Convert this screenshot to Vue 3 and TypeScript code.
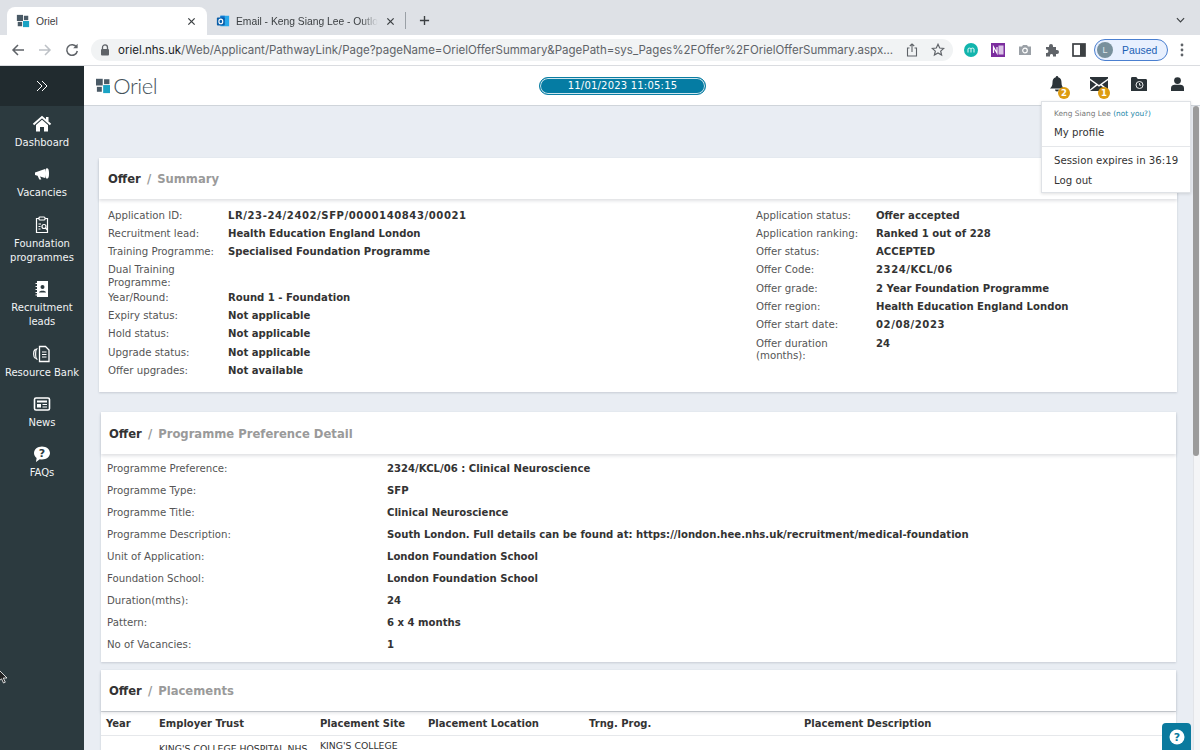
<script setup lang="ts">
interface Row {
  label: string
  value?: string
  code?: boolean
}

const summaryLeft: Row[] = [
  { label: 'Application ID:', value: 'LR/23-24/2402/SFP/0000140843/00021', code: true },
  { label: 'Recruitment lead:', value: 'Health Education England London' },
  { label: 'Training Programme:', value: 'Specialised Foundation Programme' },
  { label: 'Dual Training Programme:' },
  { label: 'Year/Round:', value: 'Round 1 - Foundation' },
  { label: 'Expiry status:', value: 'Not applicable' },
  { label: 'Hold status:', value: 'Not applicable' },
  { label: 'Upgrade status:', value: 'Not applicable' },
  { label: 'Offer upgrades:', value: 'Not available' },
]

const summaryRight: Row[] = [
  { label: 'Application status:', value: 'Offer accepted' },
  { label: 'Application ranking:', value: 'Ranked 1 out of 228' },
  { label: 'Offer status:', value: 'ACCEPTED' },
  { label: 'Offer Code:', value: '2324/KCL/06', code: true },
  { label: 'Offer grade:', value: '2 Year Foundation Programme' },
  { label: 'Offer region:', value: 'Health Education England London' },
  { label: 'Offer start date:', value: '02/08/2023', code: true },
  { label: 'Offer duration (months):', value: '24' },
]

const preference: Row[] = [
  { label: 'Programme Preference:', value: '2324/KCL/06 : Clinical Neuroscience' },
  { label: 'Programme Type:', value: 'SFP' },
  { label: 'Programme Title:', value: 'Clinical Neuroscience' },
  {
    label: 'Programme Description:',
    value: 'South London. Full details can be found at: https://london.hee.nhs.uk/recruitment/medical-foundation',
  },
  { label: 'Unit of Application:', value: 'London Foundation School' },
  { label: 'Foundation School:', value: 'London Foundation School' },
  { label: 'Duration(mths):', value: '24' },
  { label: 'Pattern:', value: '6 x 4 months' },
  { label: 'No of Vacancies:', value: '1' },
]

const placementColumns = [
  'Year',
  'Employer Trust',
  'Placement Site',
  'Placement Location',
  'Trng. Prog.',
  'Placement Description',
]
</script>

<template>
  <div class="screen">
    <div class="tabstrip">
      <div class="tab active">
        <svg class="favicon" viewBox="0 0 16 16">
          <rect x="1" y="1" width="7" height="7" fill="#4a5a66" />
          <rect x="9" y="2" width="5" height="5" fill="#4a5a66" />
          <rect x="2" y="9" width="5" height="5" fill="#4a5a66" />
          <rect x="8" y="8" width="7" height="7" fill="#1aa3c4" />
        </svg>
        <span class="tab-title">Oriel</span>
        <svg class="tab-close" viewBox="0 0 10 10">
          <path d="M1.5 1.5l7 7M8.5 1.5l-7 7" stroke="#3c4043" stroke-width="1.4" />
        </svg>
      </div>
      <div class="tab">
        <svg class="favicon" viewBox="0 0 16 16">
          <rect x="5" y="2" width="10" height="12" fill="#28a8ea" />
          <rect x="5" y="2" width="5" height="6" fill="#0f78d4" />
          <rect x="1" y="4" width="9" height="9" rx="1" fill="#0a5ea8" />
          <ellipse cx="5.5" cy="8.5" rx="2.2" ry="2.6" fill="none" stroke="#fff" stroke-width="1.3" />
        </svg>
        <span class="tab-title fade">Email - Keng Siang Lee - Outlo</span>
        <svg class="tab-close" viewBox="0 0 10 10">
          <path d="M1.5 1.5l7 7M8.5 1.5l-7 7" stroke="#3c4043" stroke-width="1.4" />
        </svg>
      </div>
      <span class="tab-sep"></span>
      <svg class="new-tab" viewBox="0 0 12 12">
        <path d="M6 1v10M1 6h10" stroke="#3c4043" stroke-width="1.5" />
      </svg>
      <svg class="tab-chevron" viewBox="0 0 10 6">
        <path d="M1 1l4 4 4-4" fill="none" stroke="#3c4043" stroke-width="1.3" />
      </svg>
    </div>

    <div class="toolbar">
      <span class="tool">
        <svg viewBox="0 0 14 14" width="14" height="14">
          <path d="M13 7H2M7 2L2 7l5 5" fill="none" stroke="#5f6368" stroke-width="1.5" />
        </svg>
      </span>
      <span class="tool">
        <svg viewBox="0 0 14 14" width="14" height="14">
          <path d="M1 7h11M7 2l5 5-5 5" fill="none" stroke="#bdc1c6" stroke-width="1.5" />
        </svg>
      </span>
      <span class="tool">
        <svg viewBox="0 0 14 14" width="14" height="14">
          <path d="M11.6 4.2A5.3 5.3 0 1 0 12.3 8" fill="none" stroke="#5f6368" stroke-width="1.5" />
          <path d="M12.6 0.8v4.4H8.2z" fill="#5f6368" />
        </svg>
      </span>
      <div class="omnibox">
        <svg class="lock" viewBox="0 0 10 12" width="10" height="12">
          <path d="M2.5 5V3.4a2.5 2.5 0 0 1 5 0V5" fill="none" stroke="#5f6368" stroke-width="1.3" />
          <rect x="1" y="5" width="8" height="6.5" rx="1" fill="#5f6368" />
        </svg>
        <span class="url"><b>oriel.nhs.uk</b>/Web/Applicant/PathwayLink/Page?pageName=OrielOfferSummary&amp;PagePath=sys_Pages%2FOffer%2FOrielOfferSummary.aspx...</span>
        <svg class="omni-icon share" viewBox="0 0 12 14" width="12" height="14">
          <path d="M3.5 5H1.5v8h9V5h-2M6 9V1M3.8 3L6 .9 8.2 3" fill="none" stroke="#5f6368" stroke-width="1.1" />
        </svg>
        <svg class="omni-icon star" viewBox="0 0 14 14" width="14" height="14">
          <path d="M7 1.3l1.7 3.7 4 .4-3 2.7.9 4L7 10l-3.6 2.1.9-4-3-2.7 4-.4z" fill="none" stroke="#5f6368" stroke-width="1.2" />
        </svg>
      </div>
      <span class="ext ext-first">
        <svg viewBox="0 0 14 14" width="14" height="14">
          <circle cx="7" cy="7" r="7" fill="#12b5ad" />
          <path d="M4 9.5V6c0-1.2 3-1.2 3 0v3.5M7 6c0-1.2 3-1.2 3 0v3.5" fill="none" stroke="#fff" stroke-width=".9" />
        </svg>
      </span>
      <span class="ext">
        <svg viewBox="0 0 14 14" width="14" height="14">
          <rect width="14" height="14" fill="#7b2d9e" />
          <rect x="7.5" y="2.5" width="5" height="9" fill="#d9c3e6" />
          <path d="M2.5 10V4l3.5 6V4" fill="none" stroke="#fff" stroke-width="1.2" />
        </svg>
      </span>
      <span class="ext">
        <svg viewBox="0 0 14 14" width="14" height="14">
          <path d="M1 3.5h3L5 2h4l1 1.5h3V12H1z" fill="#9aa0a6" />
          <circle cx="7" cy="7.5" r="2.3" fill="none" stroke="#fff" stroke-width="1.2" />
        </svg>
      </span>
      <span class="ext">
        <svg viewBox="0 0 14 14" width="14" height="14">
          <path d="M1 4h3V3a2 2 0 0 1 4 0v1h3v3h1a2 2 0 0 1 0 4h-1v2.5H8V12a1.6 1.6 0 0 0-3 0v1.5H1V10h1a1.8 1.8 0 0 0 0-3.5H1z" fill="#5f6368" />
        </svg>
      </span>
      <span class="ext">
        <svg viewBox="0 0 14 14" width="14" height="14">
          <rect x="1" y="1" width="12" height="12" fill="none" stroke="#3c4043" stroke-width="1.7" />
          <rect x="8" y="1" width="5" height="12" fill="#3c4043" />
        </svg>
      </span>
      <div class="profile">
        <span class="avatar">L</span>
        <span>Paused</span>
      </div>
      <svg class="kebab" viewBox="0 0 4 14" width="4" height="14">
        <circle cx="2" cy="2" r="1.4" fill="#5f6368" />
        <circle cx="2" cy="7" r="1.4" fill="#5f6368" />
        <circle cx="2" cy="12" r="1.4" fill="#5f6368" />
      </svg>
    </div>

    <div class="app">
      <aside class="sidebar">
        <div class="side-top">
          <svg viewBox="0 0 12 12" width="12" height="12">
            <path d="M1 1l5 5-5 5M6 1l5 5-5 5" fill="none" stroke="#fff" stroke-width="1" />
          </svg>
        </div>
        <nav class="side-nav">
          <a class="side-item">
            <svg viewBox="0 0 20 20" width="20" height="20">
              <path d="M1.5 10.5L10 3l8.5 7.5" fill="none" stroke="#fff" stroke-width="2" />
              <rect x="14" y="3" width="2.5" height="4" fill="#fff" />
              <path d="M4 11l6-5.2 6 5.2v6.5h-4V13H8v4.5H4z" fill="#fff" />
            </svg>
            <span>Dashboard</span>
          </a>
          <a class="side-item">
            <svg viewBox="0 0 20 20" width="20" height="20">
              <path d="M3 8.5L13 5v9L3 11z" fill="#fff" />
              <path d="M5.5 11.5l1.8 4h2L7.8 12z" fill="#fff" />
              <ellipse cx="15" cy="9.5" rx="2" ry="5.2" fill="#fff" />
            </svg>
            <span>Vacancies</span>
          </a>
          <a class="side-item">
            <svg viewBox="0 0 20 20" width="20" height="20">
              <path d="M7 3.5H4.5v14h11v-14H13" fill="none" stroke="#fff" stroke-width="1.2" />
              <rect x="7" y="2" width="6" height="3" rx="1" fill="none" stroke="#fff" stroke-width="1.2" />
              <path d="M6.5 9H9M6.5 11.5h2M6.5 14h2" stroke="#fff" stroke-width="1.1" />
              <circle cx="12" cy="11.5" r="2" fill="none" stroke="#fff" stroke-width="1.2" />
              <path d="M13.5 13l2 2" stroke="#fff" stroke-width="1.4" />
            </svg>
            <span>Foundation<br />programmes</span>
          </a>
          <a class="side-item">
            <svg viewBox="0 0 20 20" width="20" height="20">
              <rect x="5" y="2" width="11" height="16" fill="#fff" />
              <path d="M3.5 4.5h2M3.5 7.5h2M3.5 10.5h2M3.5 13.5h2M3.5 16h2" stroke="#fff" stroke-width="1" />
              <circle cx="10.5" cy="8" r="2" fill="#2c3a3f" />
              <path d="M7 13.5c0-2.3 7-2.3 7 0z" fill="#2c3a3f" />
            </svg>
            <span>Recruitment<br />leads</span>
          </a>
          <a class="side-item">
            <svg viewBox="0 0 20 20" width="20" height="20">
              <path d="M7.5 2.5h6L17 6v11.5H7.5z" fill="none" stroke="#fff" stroke-width="1.3" />
              <path d="M10 8h4.5M10 10.5h4.5M10 13h4.5" stroke="#fff" stroke-width="1.2" />
              <path d="M5.5 4.5C3 5 3 15 5.5 15.5M3.5 5C1 7 1 13 3.5 14.5" fill="none" stroke="#fff" stroke-width="1.2" />
            </svg>
            <span>Resource Bank</span>
          </a>
          <a class="side-item">
            <svg viewBox="0 0 20 20" width="20" height="20">
              <rect x="2.5" y="4" width="15" height="12" rx="1.5" fill="none" stroke="#fff" stroke-width="1.6" />
              <rect x="5" y="6.5" width="10" height="2" fill="#fff" />
              <rect x="5" y="10" width="4" height="3.5" fill="#fff" />
              <path d="M10.5 10.5H15M10.5 13H15" stroke="#fff" stroke-width="1.2" />
            </svg>
            <span>News</span>
          </a>
          <a class="side-item">
            <svg viewBox="0 0 20 20" width="20" height="20">
              <path d="M10 2.5c4.4 0 8 2.8 8 6.5s-3.6 6.5-8 6.5c-.8 0-1.5-.1-2.2-.2L4 18l.6-4C3 12.8 2 11 2 9c0-3.7 3.6-6.500 8-6.500z" fill="#fff" />
              <text x="10" y="13" text-anchor="middle" class="faq-mark">?</text>
            </svg>
            <span>FAQs</span>
          </a>
        </nav>
        <svg class="cursor" viewBox="0 0 10 16" width="10" height="16">
          <path d="M0 1v11l2.5-2.2L4.5 14l1.8-.8-2-4.200H8z" fill="#222" stroke="#fff" stroke-width=".8" />
        </svg>
      </aside>

      <div class="right">
        <header class="topbar">
          <div class="logo">
            <svg viewBox="0 0 16 17" width="16" height="17">
              <rect x="0" y="1" width="7.5" height="7.5" fill="#4a5a66" />
              <rect x="9" y="1.5" width="6" height="5.5" fill="#4a5a66" />
              <rect x="1" y="10" width="5.5" height="5.5" fill="#4a5a66" />
              <rect x="8" y="8" width="8" height="9" fill="#1aa3c4" />
            </svg>
            <span class="logo-text">Oriel</span>
          </div>
          <div class="clock">11/01/2023 11:05:15</div>
          <div class="top-icons">
            <span class="top-icon wide">
              <svg viewBox="0 0 14 16" width="14" height="16">
                <path d="M7 0a1.2 1.2 0 0 1 1.2 1.3C10.8 2 11.5 4 11.5 6.5c0 3 .8 4.5 2.500 6H0c1.700-1.500 2.500-3 2.500-6C2.500 4 3.200 2 5.800 1.300A1.200 1.200 0 0 1 7 0z" fill="#2b3338" />
                <path d="M5 13.5a2 2 0 0 0 4 0z" fill="#2b3338" />
              </svg>
              <span class="badge">2</span>
            </span>
            <span class="top-icon wide">
              <svg viewBox="0 0 18 14" width="18" height="14">
                <path d="M0 0h18v1.5L9 8 0 1.5z" fill="#2b3338" />
                <path d="M0 3.3L6 7.6 0 12.5zM18 3.3L12 7.6l6 4.9zM7.3 8.5L9 9.8l1.7-1.3L18 14H0z" fill="#2b3338" />
              </svg>
              <span class="badge">1</span>
            </span>
            <span class="top-icon">
              <svg viewBox="0 0 16 14" width="16" height="14">
                <path d="M0 1.5C0 .7.5 0 1.3 0h4l1.500 2h7.900c.7 0 1.300.6 1.300 1.300V14H0z" fill="#2b3338" />
                <circle cx="8.5" cy="8" r="3.5" fill="none" stroke="#fff" stroke-width=".9" />
                <path d="M8.5 6v2.200h1.700" fill="none" stroke="#fff" stroke-width=".8" />
              </svg>
            </span>
            <span class="top-icon">
              <svg viewBox="0 0 13 14" width="13" height="14">
                <circle cx="6.5" cy="3.6" r="3.4" fill="#2b3338" />
                <path d="M0 14v-3c0-2.3 2-3.3 3.5-3.3h6c1.500 0 3.500 1 3.500 3.300v3z" fill="#2b3338" />
              </svg>
            </span>
          </div>
        </header>

        <div class="body-area">
          <main class="content">
            <section class="card first">
              <h2 class="card-head"><b>Offer</b> <span class="slash">/</span> Summary</h2>
              <div class="summary">
                <div class="summary-col">
                  <div v-for="row in summaryLeft" :key="row.label" class="kv">
                    <span class="kv-label">{{ row.label }}</span>
                    <span class="kv-value" :class="{ code: row.code }">{{ row.value }}</span>
                  </div>
                </div>
                <div class="summary-col">
                  <div v-for="row in summaryRight" :key="row.label" class="kv">
                    <span class="kv-label">{{ row.label }}</span>
                    <span class="kv-value" :class="{ code: row.code }">{{ row.value }}</span>
                  </div>
                </div>
              </div>
            </section>

            <section class="card inset pref-card">
              <h2 class="card-head tall"><b>Offer</b> <span class="slash">/</span> Programme Preference Detail</h2>
              <div class="pref">
                <div v-for="row in preference" :key="row.label" class="pref-row">
                  <span class="pref-label">{{ row.label }}</span>
                  <span class="kv-value">{{ row.value }}</span>
                </div>
              </div>
            </section>

            <section class="card inset">
              <h2 class="card-head"><b>Offer</b> <span class="slash">/</span> Placements</h2>
              <div class="place-head">
                <span v-for="col in placementColumns" :key="col">{{ col }}</span>
              </div>
              <div class="place-row">
                <span></span>
                <span class="employer">KING'S COLLEGE HOSPITAL NHS</span>
                <span>KING'S COLLEGE<br />HOSPITAL</span>
              </div>
            </section>
          </main>
          <div class="scroll-track"><div class="scroll-thumb"></div></div>
        </div>
      </div>

      <div class="menu">
        <div class="menu-user">Keng Siang Lee <span class="not-you">(not you?)</span></div>
        <div class="menu-item profile-item">My profile</div>
        <div class="menu-div"></div>
        <div class="menu-item session">Session expires in 36:19</div>
        <div class="menu-item logout">Log out</div>
      </div>

      <div class="help">
        <svg viewBox="0 0 16 16" width="16" height="16">
          <circle cx="8" cy="8" r="7.5" fill="#fff" />
          <text x="8" y="12" text-anchor="middle" class="help-mark">?</text>
        </svg>
      </div>
    </div>
  </div>
</template>

<style>
html,
body {
  margin: 0;
  overflow: hidden;
}
</style>

<style scoped>
.screen {
  position: relative;
  width: 1200px;
  height: 750px;
  overflow: hidden;
  font-family: "DejaVu Sans", Verdana, sans-serif;
  font-size: 10.2px;
  color: #333;
  background: #fff;
}

/* browser chrome */
.tabstrip {
  position: relative;
  display: flex;
  align-items: flex-end;
  height: 35px;
  padding-left: 7px;
  background: #dee1e6;
  box-sizing: border-box;
  font-family: "Liberation Sans", Arial, sans-serif;
  font-size: 10.3px;
  color: #3c4043;
}

.tab {
  display: flex;
  align-items: center;
  width: 199px;
  height: 28px;
  padding: 0 9px;
  box-sizing: border-box;
  border-radius: 8px 8px 0 0;
}

.tab.active {
  background: #fff;
  width: 200px;
}

.favicon {
  width: 14px;
  height: 14px;
  flex: none;
  margin-right: 6px;
}

.tab-title {
  flex: 1;
  white-space: nowrap;
  overflow: hidden;
}

.tab-title.fade {
  -webkit-mask-image: linear-gradient(to right, #000 88%, transparent 100%);
  mask-image: linear-gradient(to right, #000 88%, transparent 100%);
}

.tab-close {
  width: 9px;
  height: 9px;
  flex: none;
  margin-left: 8px;
  margin-right: 2px;
}

.tab-sep {
  width: 1px;
  height: 17px;
  margin: 0 0 6px -1px;
  background: #9aa0a6;
}

.new-tab {
  width: 11px;
  height: 11px;
  margin: 0 0 9px 13px;
}

.tab-chevron {
  width: 9px;
  height: 6px;
  margin: 0 15px 12px auto;
}

.toolbar {
  display: flex;
  align-items: center;
  height: 31px;
  padding-left: 4.5px;
  box-sizing: border-box;
  background: #fff;
  border-bottom: 1px solid #dadce0;
}

.tool {
  display: flex;
  justify-content: center;
  width: 27px;
}

.omnibox {
  display: flex;
  align-items: center;
  width: 862px;
  height: 22px;
  margin-left: 5.5px;
  padding: 0 8px 0 9px;
  box-sizing: border-box;
  background: #f1f3f4;
  border-radius: 11px;
}

.lock {
  flex: none;
  margin-right: 8px;
}

.url {
  flex: none;
  width: 787px;
  white-space: nowrap;
  font-family: Inter, "Liberation Sans", sans-serif;
  font-size: 11.5px;
  color: #5f6368;
}

.url b {
  font-weight: 400;
  color: #202124;
}

.omni-icon {
  flex: none;
}

.share {
  margin-left: 1px;
}

.star {
  margin-left: 13px;
}

.ext {
  display: flex;
  justify-content: center;
  width: 27px;
}

.ext-first {
  margin-left: 4.5px;
}

.profile {
  display: flex;
  align-items: center;
  gap: 9px;
  width: 74px;
  height: 22px;
  margin-left: 1.5px;
  padding-left: 2px;
  box-sizing: border-box;
  background: #e8f0fe;
  border: 1px solid #4a7fd0;
  border-radius: 11px;
  font-family: "Liberation Sans", Arial, sans-serif;
  font-size: 10.4px;
  color: #1a5fb4;
}

.avatar {
  display: flex;
  align-items: center;
  justify-content: center;
  width: 16px;
  height: 16px;
  border-radius: 50%;
  background: #78909c;
  color: #dfe6ea;
  font-size: 9px;
}

.kebab {
  margin-left: 12px;
}

/* application */
.app {
  display: flex;
  height: 684px;
}

.sidebar {
  position: relative;
  flex: none;
  width: 84px;
  background: #2c3a3f;
  color: #fff;
}

.side-top {
  display: flex;
  align-items: center;
  justify-content: center;
  height: 40px;
  background: #212b2f;
}

.side-item {
  display: flex;
  flex-direction: column;
  align-items: center;
  padding: 8px 0 6.4px;
  font-size: 10px;
  text-align: center;
  white-space: nowrap;
  line-height: 14px;
  color: #f2f4f5;
}

.side-item svg {
  margin-bottom: 2px;
}

.faq-mark {
  font-family: "DejaVu Sans", sans-serif;
  font-size: 11px;
  font-weight: 700;
  fill: #2c3a3f;
}

.cursor {
  position: absolute;
  left: -1px;
  top: 603px;
}

.right {
  display: flex;
  flex-direction: column;
  flex: 1;
  min-width: 0;
}

.topbar {
  display: flex;
  align-items: center;
  flex: none;
  height: 40px;
  padding-right: 4px;
  box-sizing: border-box;
  background: #fff;
  border-bottom: 1px solid #cfd4da;
}

.logo {
  display: flex;
  align-items: center;
  gap: 3px;
  width: 61px;
  margin-left: 12px;
}

.logo-text {
  font-family: Lato, "Open Sans", sans-serif;
  font-weight: 300;
  font-size: 22px;
  letter-spacing: -0.5px;
  line-height: 22px;
  color: #44525a;
}

.clock {
  width: 167px;
  height: 18px;
  margin-left: 382px;
  box-sizing: border-box;
  border: 1px solid #0b7ea3;
  box-shadow: inset 0 0 0 1px #cfe6ee;
  border-radius: 9px;
  background: #057ca3;
  color: #fff;
  font-size: 10px;
  line-height: 16px;
  text-align: center;
  letter-spacing: 0.2px;
}

.top-icons {
  display: flex;
  margin-left: auto;
  margin-top: -4px;
}

.top-icon {
  position: relative;
  display: flex;
  justify-content: center;
  align-items: center;
  width: 38px;
  height: 20px;
}

.top-icon.wide {
  width: 42px;
}

.badge {
  position: absolute;
  left: 50%;
  top: 13.5px;
  width: 12px;
  height: 12px;
  margin-left: 1px;
  border-radius: 50%;
  background: #dd9c12;
  color: #fff;
  font-size: 8.5px;
  font-weight: 700;
  line-height: 12px;
  text-align: center;
}

.top-icon.wide + .top-icon.wide .badge {
  margin-left: -1px;
}

.body-area {
  display: flex;
  flex: 1;
  min-height: 0;
  background: #e9edf3;
}

.content {
  flex: 1;
  min-width: 0;
  padding: 52px 16px 0 15px;
  overflow: hidden;
}

.scroll-track {
  flex: none;
  width: 7px;
  background: #f4f5f7;
  border-left: 1px solid #e2e4e8;
  box-sizing: border-box;
}

.scroll-thumb {
  height: 350px;
  margin-left: -1px;
  width: 6px;
  border-radius: 3px;
  background: #9b9b9b;
}

.card {
  background: #fff;
  box-shadow: 0 1px 2px rgba(60, 70, 90, 0.2);
}

.card.first {
  margin-bottom: 20px;
}

.card.inset {
  margin: 0 1px 0 2px;
}

.pref-card.inset {
  margin-bottom: 8px;
}

.card-head {
  position: relative;
  height: 41px;
  margin: 0;
  padding: 1px 0 0 9px;
  box-sizing: border-box;
  font-size: 11.6px;
  font-weight: 700;
  line-height: 41px;
  color: #9a9a9a;
  background: #fff;
  box-shadow: 0 2px 3px rgba(60, 70, 90, 0.16);
}

.inset .card-head {
  padding-left: 8px;
}

.card-head.tall {
  height: 42px;
  line-height: 42px;
}

.card-head b {
  color: #333;
}

.slash {
  margin: 0 2px;
}

.summary {
  display: flex;
  padding: 10.5px 0 8.8px 9px;
}

.summary-col {
  flex: none;
  width: 648px;
}

.summary-col + .summary-col {
  width: 420px;
}

.kv {
  display: flex;
  min-height: 18.3px;
  padding-bottom: 2.3px;
  box-sizing: border-box;
  line-height: 12.5px;
}

.kv-label {
  flex: none;
  width: 120px;
  padding-right: 8px;
  box-sizing: border-box;
  color: #555;
}

.kv-value {
  font-size: 10.1px;
  font-weight: 700;
  color: #333;
}

.kv-value.code {
  letter-spacing: 0.55px;
}

.pref {
  padding: 4px 0 6px 6px;
}

.pref-row {
  display: flex;
  align-items: center;
  height: 22px;
}

.pref-label {
  flex: none;
  width: 280px;
  color: #555;
}

.place-head,
.place-row {
  display: grid;
  grid-template-columns: 53px 161px 108px 161px 215px 1fr;
  padding-left: 5px;
}

.place-head {
  height: 25px;
  align-items: center;
  box-sizing: border-box;
  border-top: 1px solid #d5d8dc;
  border-bottom: 1px solid #e6e8eb;
  font-size: 10px;
  font-weight: 700;
  color: #333;
}

.place-row {
  padding-top: 3px;
  font-size: 9.3px;
  line-height: 13px;
  color: #333;
}

.employer {
  padding-top: 3px;
  white-space: nowrap;
}

/* overlays */
.menu {
  position: absolute;
  left: 1041px;
  top: 101px;
  width: 150px;
  height: 92px;
  box-sizing: border-box;
  padding-left: 12px;
  background: #fff;
  border: 1px solid #dfe2e6;
  box-shadow: 0 1px 3px rgba(0, 0, 0, 0.12);
  color: #333;
}

.menu-user {
  margin-top: 6px;
  font-size: 7.4px;
  line-height: 12px;
  color: #777;
}

.not-you {
  color: #1b86a8;
}

.menu-item {
  font-size: 10.2px;
  line-height: 14px;
  white-space: nowrap;
}

.profile-item {
  margin-top: 6px;
}

.menu-div {
  height: 1px;
  margin: 6px 0 0 -12px;
  background: #e5e7ea;
}

.session {
  margin-top: 7px;
}

.logout {
  margin-top: 6px;
}

.help {
  position: absolute;
  left: 1162px;
  top: 723px;
  display: flex;
  justify-content: center;
  width: 29px;
  height: 27px;
  padding-top: 6px;
  box-sizing: border-box;
  border-radius: 4px 4px 0 0;
  background: #0a7a9e;
}

.help-mark {
  font-family: "DejaVu Sans", sans-serif;
  font-size: 11px;
  font-weight: 700;
  fill: #0a7a9e;
}
</style>
